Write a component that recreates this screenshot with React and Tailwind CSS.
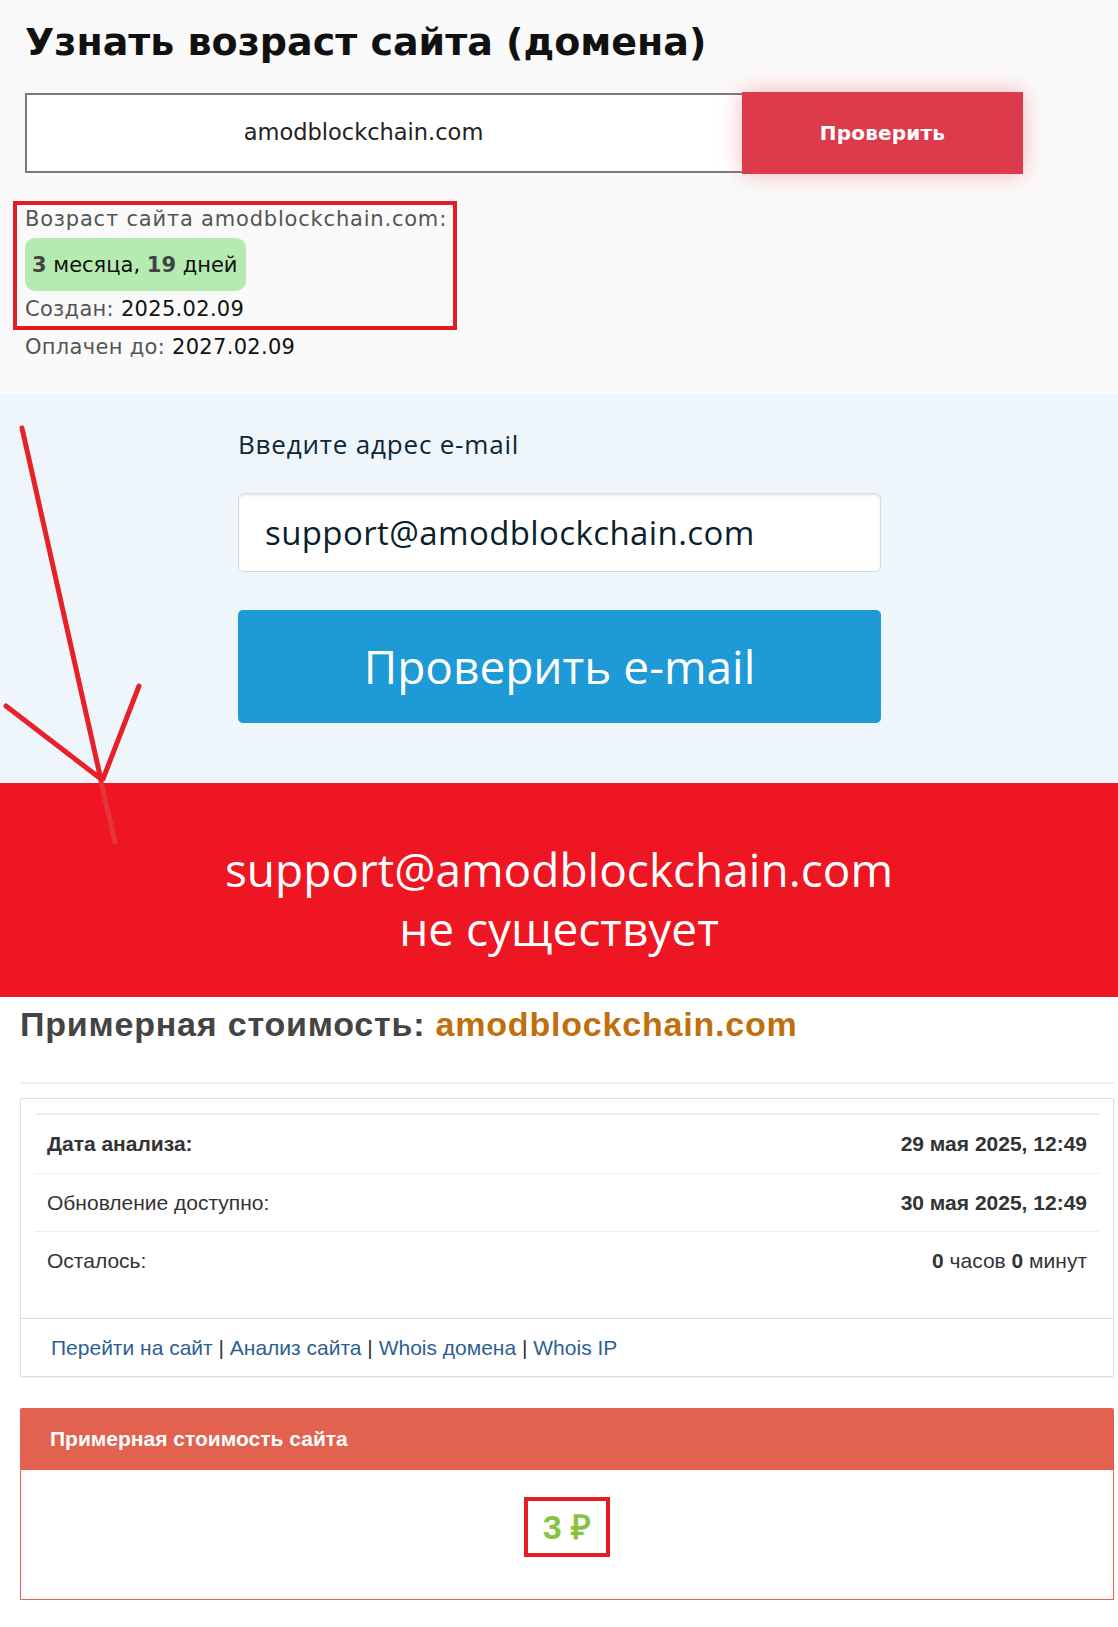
const TOP_FONT = "font-['DejaVu_Sans',sans-serif]"

function Arrow() {
  return (
    <svg
      className="pointer-events-none absolute left-0 top-0"
      width="160"
      height="860"
      viewBox="0 0 160 860"
      fill="none"
    >
      <path d="M22 428 L101 780" stroke="#e8202a" strokeWidth="5" strokeLinecap="round" />
      <path d="M101 782 L115 842" stroke="#e6333c" strokeWidth="5" strokeLinecap="round" />
      <path d="M6 706 L101 779" stroke="#e8202a" strokeWidth="5" strokeLinecap="round" />
      <path d="M139 686 L103 779" stroke="#e8202a" strokeWidth="5" strokeLinecap="round" />
    </svg>
  )
}

function DomainAge() {
  return (
    <section className={`h-[394px] bg-[#fafafa] px-[25px] pt-[19px] ${TOP_FONT}`}>
      <h1 className="text-[38px] font-bold leading-[46px] text-[#111]">
        Узнать возраст сайта (домена)
      </h1>
      <div className="mt-[27px] flex items-center">
        <div className="flex h-[80px] w-[717px] items-center justify-center border-2 border-r-0 border-[#7a7a7a] bg-white pr-[42px] text-[22.5px] text-[#222]">
          amodblockchain.com
        </div>
        <button
          type="button"
          className="h-[82px] w-[281px] bg-[#dd3b4c] text-[20px] font-bold tracking-[0.2px] text-white shadow-[0_0_22px_rgba(240,60,70,0.35)]"
        >
          Проверить
        </button>
      </div>
      <div className="-ml-[12px] mt-[27px] h-[129px] w-[444px] border-4 border-[#e51c23] pl-[8px] text-[21px] leading-[28px] tracking-[0.3px]">
        <p className="tracking-[0.8px] text-[#555]">Возраст сайта amodblockchain.com:</p>
        <div className="mt-[5px] flex h-[53px] w-[221px] items-center rounded-[10px] bg-[#b5ebb0] px-[7px] tracking-normal text-[#111]">
          <span className="font-bold text-[#444]">3</span>&nbsp;месяца,&nbsp;
          <span className="font-bold text-[#444]">19</span>&nbsp;дней
        </div>
        <p className="mt-[4px] text-[#555]">
          Создан: <span className="text-[#111]">2025.02.09</span>
        </p>
      </div>
      <p className="mt-[3px] text-[21px] leading-[28px] tracking-[0.3px] text-[#555]">
        Оплачен до: <span className="text-[#111]">2027.02.09</span>
      </p>
    </section>
  )
}

function EmailCheck() {
  return (
    <section className="h-[389px] bg-[#eef6fb] pl-[238px] pt-[33px] font-['Open_Sans',sans-serif]">
      <p className="text-[26px] font-medium leading-[34px] tracking-[0.8px] text-[#0e2636]">
        Введите адрес e-mail
      </p>
      <div className="mt-[32px] flex h-[79px] w-[643px] items-center rounded-[6px] border border-[#d5dadd] bg-white pl-[26px] text-[33px] font-medium tracking-[0.4px] text-[#0b1f2e] shadow-[inset_0_2px_2px_rgba(0,0,0,0.08)]">
        support@amodblockchain.com
      </div>
      <button
        type="button"
        className="mt-[38px] h-[113px] w-[643px] rounded-[5px] bg-[#1e9ad6] text-[46px] font-medium text-white"
      >
        Проверить e-mail
      </button>
    </section>
  )
}

function EmailResult() {
  return (
    <section className="h-[214px] bg-[#ee1622] pt-[57px] text-center font-['Open_Sans',sans-serif] text-[46px] font-medium leading-[59px] text-white">
      <p>support@amodblockchain.com</p>
      <p>не существует</p>
    </section>
  )
}

const ROWS = [
  { label: 'Дата анализа:', strong: true, value: <b>29 мая 2025, 12:49</b> },
  { label: 'Обновление доступно:', value: <b>30 мая 2025, 12:49</b> },
  {
    label: 'Осталось:',
    value: (
      <>
        <b>0</b> часов <b>0</b> минут
      </>
    ),
  },
]

const LINKS = ['Перейти на сайт', 'Анализ сайта', 'Whois домена', 'Whois IP']

function Valuation() {
  return (
    <section className="pl-[20px] pr-[4px] pt-[8px] font-['Liberation_Sans',Arial,sans-serif] text-[#333]">
      <h2 className="text-[34px] font-bold leading-[38px] tracking-[0.8px] text-[#444]">
        Примерная стоимость: <span className="text-[#bf6f0c]">amodblockchain.com</span>
      </h2>
      <div className="mt-[39px] h-[2px] bg-[#eeeeee]" />

      <div className="mt-[14px] rounded-[2px] border border-[#dddddd] bg-white shadow-[0_1px_1px_rgba(0,0,0,0.05)]">
        <div className="px-[14px] pb-[29px] pt-[14px]">
          <div className="border-t-2 border-[#eeeeee] text-[21px]">
            {ROWS.map((r, i) => (
              <div
                key={r.label}
                className={`flex items-center justify-between px-[12px] ${
                  i === 0 ? 'h-[58px]' : 'h-[58px] border-t border-[#eeeeee]'
                }`}
              >
                <span className={r.strong ? 'font-bold' : ''}>{r.label}</span>
                <span>{r.value}</span>
              </div>
            ))}
          </div>
        </div>
        <div className="h-[58px] border-t border-[#dddddd] px-[30px] text-[21px] leading-[58px]">
          {LINKS.map((l, i) => (
            <span key={l}>
              {i > 0 && <span className="text-[#333]"> | </span>}
              <a className="text-[#2e5f93]">{l}</a>
            </span>
          ))}
        </div>
      </div>

      <div className="mt-[31px]">
        <div className="flex h-[62px] items-center rounded-t-[2px] bg-[#e2614f] px-[30px] text-[21px] font-bold text-white">
          Примерная стоимость сайта
        </div>
        <div className="flex h-[130px] justify-center border border-t-0 border-[#e2614f] bg-white pt-[27px]">
          <div className="flex h-[60px] w-[86px] items-center justify-center border-4 border-[#e51c23] text-[34px] font-bold text-[#86c440]">
            3 ₽
          </div>
        </div>
      </div>
    </section>
  )
}

export default function App() {
  return (
    <div className="relative min-h-[1627px] w-[1118px] bg-white">
      <DomainAge />
      <EmailCheck />
      <EmailResult />
      <Valuation />
      <Arrow />
    </div>
  )
}
